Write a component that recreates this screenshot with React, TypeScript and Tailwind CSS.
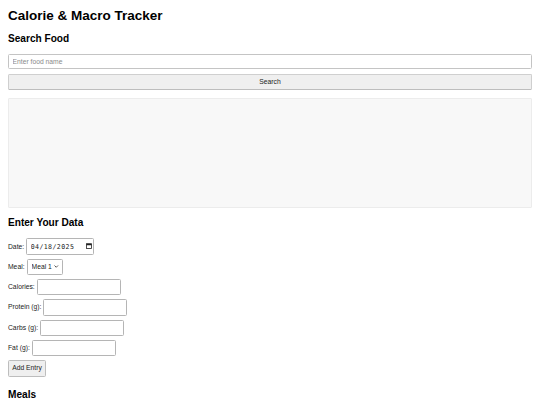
import { useState } from "react";

export default function App() {
  const [food, setFood] = useState("");
  const [date, setDate] = useState("04/18/2025");
  const [meal, setMeal] = useState("Meal 1");
  const [calories, setCalories] = useState("");
  const [protein, setProtein] = useState("");
  const [carbs, setCarbs] = useState("");
  const [fat, setFat] = useState("");

  const inputCls =
    "h-[16.3px] w-[84px] border border-[#b5b5b5] rounded-[1.5px] bg-white px-[3px] text-[6.75px] outline-none";

  return (
    <div className="min-h-screen bg-white px-2 pt-[8px] font-['Liberation_Sans',Arial,sans-serif] text-[6.75px] text-[#222]">
      <h1 className="text-[13.5px] font-bold leading-[15.5px] text-black">
        Calorie &amp; Macro Tracker
      </h1>

      {/* Search */}
      <h2 className="mt-[9.3px] text-[10.1px] font-bold leading-[11.6px] text-black">
        Search Food
      </h2>
      <input
        type="text"
        placeholder="Enter food name"
        value={food}
        onChange={(e) => setFood(e.target.value)}
        className="mt-[9.6px] block h-[15.5px] w-full border border-[#c4c4c4] rounded-[1.5px] bg-white px-[3.5px] text-[6.75px] outline-none placeholder:text-[#8a8a8a]"
      />
      <button className="mt-[4.5px] block h-[16px] w-full border border-[#cfcfcf] border-b-[#bdbdbd] rounded-[1.5px] bg-[#efefef] text-[6.75px] text-[#222]">
        Search
      </button>

      <div className="mt-[8.5px] h-[110px] border border-[#ececec] rounded-[1px] bg-[#f8f8f8]"></div>

      {/* Entry form */}
      <h2 className="mt-[8.3px] text-[10.1px] font-bold leading-[11.6px] text-black">
        Enter Your Data
      </h2>

      <div className="mt-[10.1px] flex flex-col gap-[4px]">
        <div className="flex h-[16.3px] items-center gap-[2px]">
          <label>Date:</label>
          <div className="relative">
            <input
              type="text"
              value={date}
              onChange={(e) => setDate(e.target.value)}
              className="h-[16.3px] w-[68px] border border-[#b5b5b5] rounded-[1.5px] bg-white pl-[3.5px] pr-[12px] font-['DejaVu_Sans_Mono',monospace] text-[6.6px] tracking-[0.4px] text-[#222] outline-none"
            />
            <svg
              className="pointer-events-none absolute right-[2.5px] top-[5px]"
              width="6"
              height="6"
              viewBox="0 0 12 12"
            >
              <rect x="1" y="1.5" width="10" height="9.5" fill="none" stroke="#222" strokeWidth="1.6" />
              <rect x="1" y="1.5" width="10" height="3" fill="#222" />
            </svg>
          </div>
        </div>
        <div className="flex h-[16.3px] items-center gap-[2px]">
          <label>Meal:</label>
          <div className="relative">
            <select
              value={meal}
              onChange={(e) => setMeal(e.target.value)}
              className="h-[16.3px] w-[36px] appearance-none border border-[#b5b5b5] rounded-[1.5px] bg-white pl-[4px] text-[6.75px] text-[#222] outline-none"
            >
              <option>Meal 1</option>
              <option>Meal 2</option>
              <option>Meal 3</option>
            </select>
            <svg
              className="pointer-events-none absolute right-[4px] top-[6.5px]"
              width="4.5"
              height="3"
              viewBox="0 0 9 6"
            >
              <path d="M1 1 L4.5 4.5 L8 1" fill="none" stroke="#222" strokeWidth="1.5" />
            </svg>
          </div>
        </div>
        <div className="flex h-[16.3px] items-center gap-[2px]">
          <label>Calories:</label>
          <input value={calories} onChange={(e) => setCalories(e.target.value)} className={inputCls} />
        </div>
        <div className="flex h-[16.3px] items-center gap-[2px]">
          <label>Protein (g):</label>
          <input value={protein} onChange={(e) => setProtein(e.target.value)} className={inputCls} />
        </div>
        <div className="flex h-[16.3px] items-center gap-[2px]">
          <label>Carbs (g):</label>
          <input value={carbs} onChange={(e) => setCarbs(e.target.value)} className={inputCls} />
        </div>
        <div className="flex h-[16.3px] items-center gap-[2px]">
          <label>Fat (g):</label>
          <input value={fat} onChange={(e) => setFat(e.target.value)} className={inputCls} />
        </div>
        <div>
          <button className="h-[16.3px] w-[38px] border border-[#bdbdbd] rounded-[1.5px] bg-[#efefef] text-[6.75px] text-[#222]">
            Add Entry
          </button>
        </div>
      </div>

      <h2 className="mt-[12.2px] text-[10.1px] font-bold leading-[11.6px] text-black">
        Meals
      </h2>
    </div>
  );
}
